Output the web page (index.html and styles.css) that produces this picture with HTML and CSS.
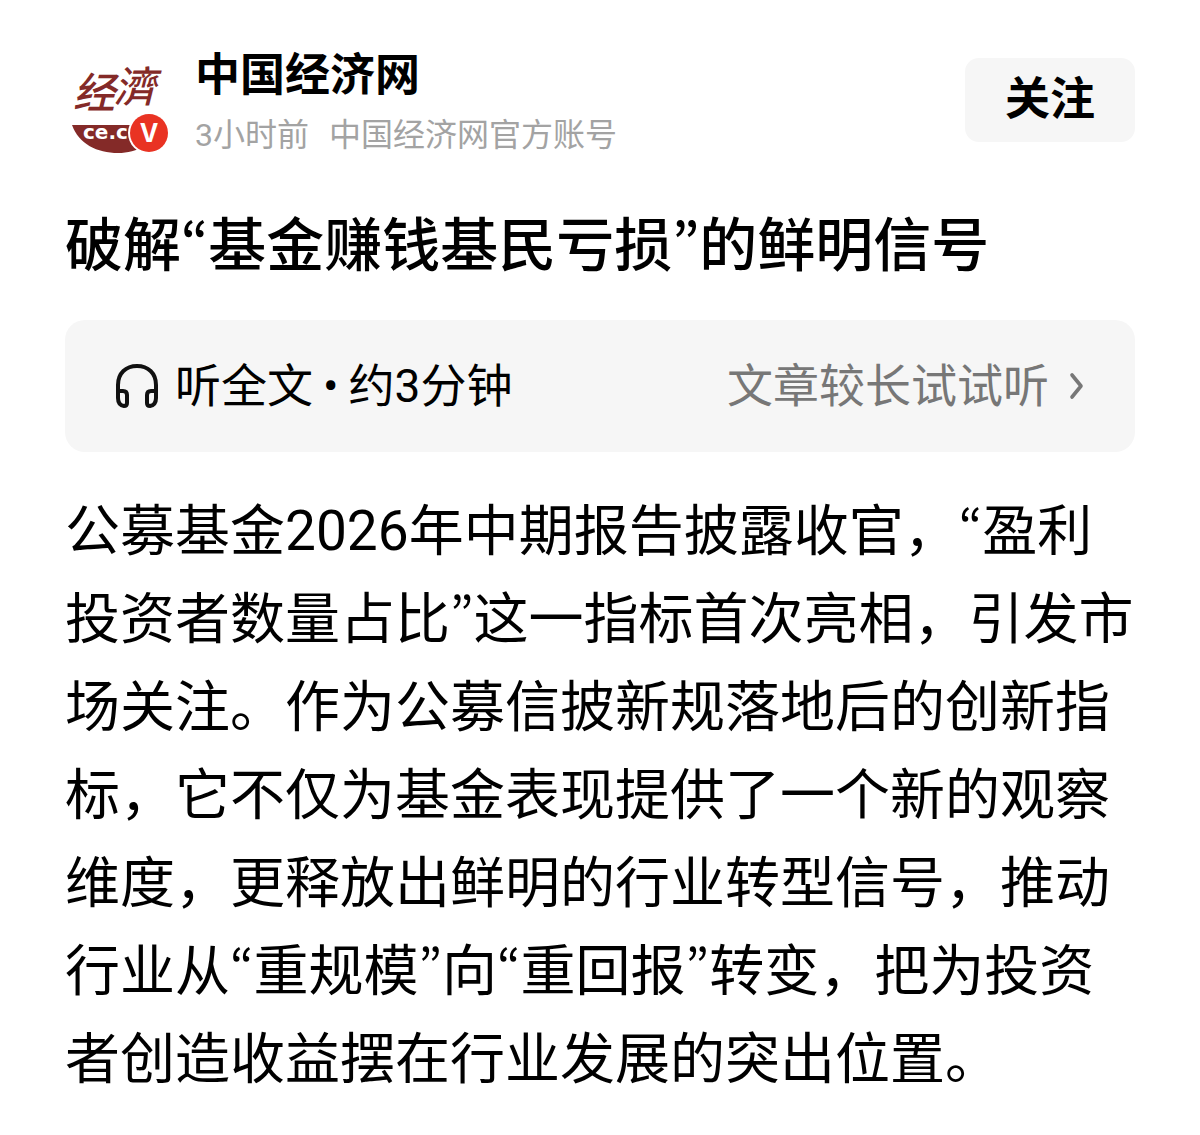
FILE: index.html
```html
<!DOCTYPE html>
<html lang="zh-CN">
<head>
    <title>破解“基金赚钱基民亏损”的鲜明信号</title>
    <meta charset="UTF-8">
    <meta name="viewport" content="width=device-width, initial-scale=1">
    <link rel="stylesheet" href="styles.css">
</head>
<body>
    <article class="article">
        <header class="author">
            <svg class="avatar" viewBox="0 0 106 100" role="img" aria-label="中国经济网">
                <text class="logo-char" x="8" y="53">经</text>
                <text class="logo-char" x="49" y="47">濟</text>
                <path d="M7 70H97C90 88 72 98 53 98C32 98 14 89 7 70Z" fill="#842a28"/>
                <text class="logo-domain" x="18" y="84">ce.c</text>
                <circle cx="84" cy="78" r="21" fill="#fff"/>
                <circle cx="84" cy="78" r="19" fill="#e93323"/>
                <text class="logo-badge" x="84" y="87">V</text>
            </svg>
            <div class="author-info">
                <div class="author-name">中国经济网</div>
                <div class="author-meta">
                    <span>3小时前</span>
                    <span>中国经济网官方账号</span>
                </div>
            </div>
            <button class="follow" type="button">关注</button>
        </header>

        <h1>破解<span class="quote">“</span>基金赚钱基民亏损<span class="quote">”</span>的鲜明信号</h1>

        <a class="listen" href="#listen">
            <svg class="headphones" viewBox="0 0 44 46" fill="none" stroke="#111" stroke-width="4" stroke-linejoin="round" aria-hidden="true">
                <path d="M3 35V22C3 10 11 3 22 3S41 10 41 22V35"/>
                <path d="M3 28H8Q12 28 12 32V40Q12 43 9 43Q3 42 3 35Z"/>
                <path d="M41 28H36Q32 28 32 32V40Q32 43 35 43Q41 42 41 35Z"/>
            </svg>
            <span class="listen-label">听全文<span class="dot">•</span>约3分钟</span>
            <span class="listen-hint">文章较长试试听</span>
            <svg class="arrow" viewBox="0 0 16 28" fill="none" stroke="#777" stroke-width="3.6" stroke-linecap="round" stroke-linejoin="round" aria-hidden="true">
                <path d="M3 3L12 14L3 25"/>
            </svg>
        </a>

        <p class="content">公募基金2026年中期报告披露收官，<span class="quote">“</span>盈利投资者数量占比<span class="quote">”</span>这一指标首次亮相，引发市场关注。作为公募信披新规落地后的创新指标，它不仅为基金表现提供了一个新的观察维度，更释放出鲜明的行业转型信号，推动行业从<span class="quote">“</span>重规模<span class="quote">”</span>向<span class="quote">“</span>重回报<span class="quote">”</span>转变，把为投资者创造收益摆在行业发展的突出位置。</p>
    </article>
</body>
</html>
```

FILE: styles.css
```css
:root {
    --text-color: #000;
    --muted: #a3a3a3;
    --bg-gray: #f6f6f6;
}

* {
    box-sizing: border-box;
}

body {
    margin: 0;
    background-color: #fff;
    color: var(--text-color);
    font-family: Roboto, "Noto Sans CJK SC", sans-serif;
    text-spacing-trim: space-all;
}

.article {
    padding: 46px 65px 32px;
}

.author {
    display: flex;
    align-items: flex-start;
    gap: 24px;
}

.avatar {
    flex: none;
    width: 106px;
    height: 100px;
    margin-top: 9px;
    overflow: visible;
}

.logo-char {
    font-family: "Noto Sans CJK TC", sans-serif;
    font-size: 42px;
    font-style: italic;
    font-weight: 500;
    fill: #842a28;
}

.logo-domain {
    font-family: "DejaVu Sans", sans-serif;
    font-size: 20px;
    font-weight: 700;
    fill: #fff;
}

.logo-badge {
    font-family: Inter, sans-serif;
    font-size: 25px;
    font-weight: 700;
    text-anchor: middle;
    fill: #fff;
}

.author-info {
    flex: 1;
}

.author-name {
    font-size: 45px;
    font-weight: 700;
    line-height: 60px;
}

.author-meta {
    display: flex;
    gap: 20px;
    margin-top: 7px;
    color: var(--muted);
    font-size: 32px;
    line-height: 44px;
}

.follow {
    margin-top: 12px;
    padding: 12px 40px;
    border: none;
    border-radius: 14px;
    background-color: var(--bg-gray);
    color: var(--text-color);
    font-family: inherit;
    font-size: 45px;
    font-weight: 700;
    line-height: 60px;
    cursor: pointer;
}

h1 {
    margin: 49px 0 34px;
    font-size: 58px;
    font-weight: 500;
    line-height: 80px;
}

/* narrow curly quotes instead of the full-width ones */
.quote {
    font-family: "Noto Sans CJK SC", sans-serif;
    font-size: 0.9em;
    font-variant-east-asian: proportional-width;
    line-height: 1;
}

.listen {
    display: flex;
    align-items: center;
    padding: 34px 50px;
    border-radius: 20px;
    background-color: var(--bg-gray);
    color: var(--text-color);
    font-size: 46px;
    line-height: 64px;
    text-decoration: none;
}

.headphones {
    width: 44px;
    height: 46px;
    margin-right: 16px;
}

.dot {
    margin: 0 10px;
}

.listen-hint {
    margin-left: auto;
    color: #777;
}

.arrow {
    width: 16px;
    height: 28px;
    margin-left: 20px;
}

.content {
    margin: 35px 0 0;
    font-size: 55px;
    line-height: 88px;
}
```
